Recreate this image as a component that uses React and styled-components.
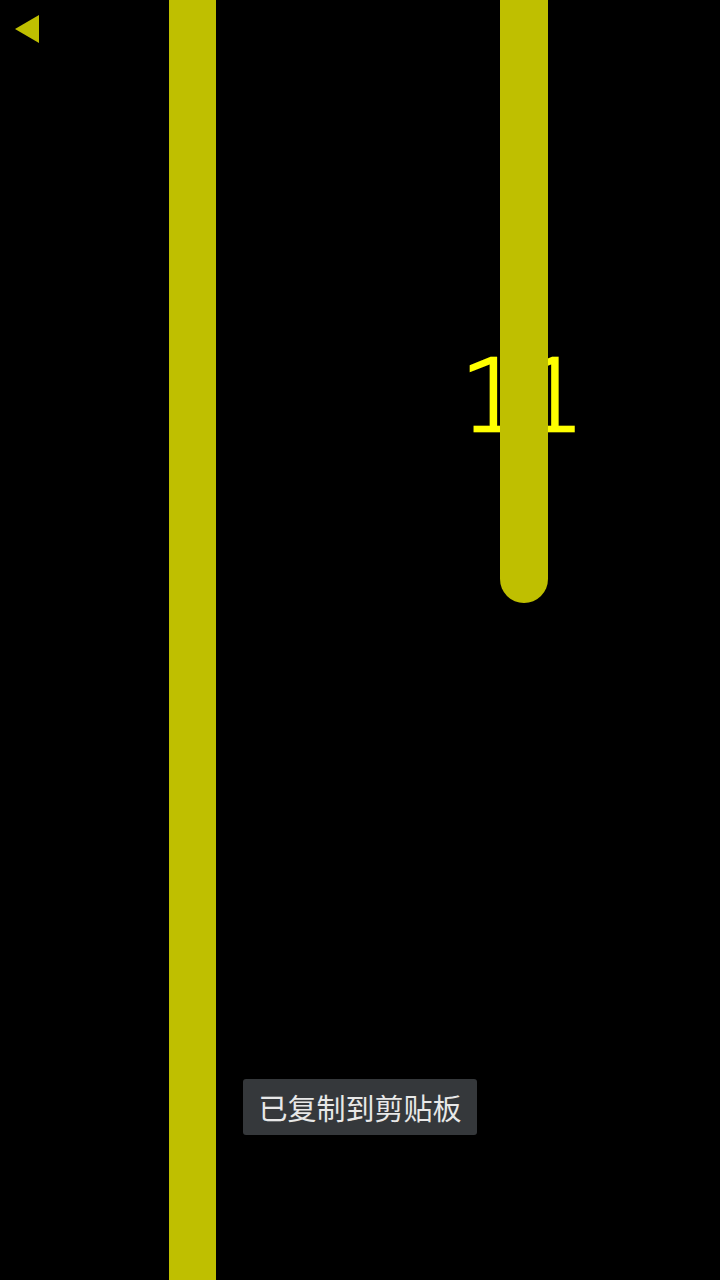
import React from "react";
import styled, { createGlobalStyle } from "styled-components";

const GlobalStyle = createGlobalStyle`
  html, body {
    margin: 0;
    padding: 0;
    background: #000;
  }
  #root {
    height: 1280px;
  }
`;

const Stage = styled.div`
  position: relative;
  width: 720px;
  height: 1280px;
  overflow: hidden;
  background: #000;
  display: flex;
  flex-direction: row;
  align-items: flex-start;
  padding-left: 169px;
  box-sizing: border-box;
  font-family: "Roboto", "Noto Sans CJK SC", sans-serif;
`;

const Bar = styled.div`
  flex: none;
  width: ${p => p.w}px;
  height: ${p => p.h}px;
  margin-left: ${p => p.gap || 0}px;
  background: #bfbf00;
  border-radius: ${p => (p.round ? `0 0 ${p.w / 2}px ${p.w / 2}px` : "0")};
  position: relative;
  z-index: 2;
`;

const BackButton = styled.button`
  position: absolute;
  top: 14px;
  left: 14px;
  width: 28px;
  height: 32px;
  padding: 0;
  border: none;
  background: none;
  z-index: 3;
  & svg {
    display: block;
  }
`;

const Score = styled.div`
  position: absolute;
  top: 342px;
  left: 460px;
  font-family: "DejaVu Sans ExtraLight", "DejaVu Sans", sans-serif;
  font-weight: 200;
  font-size: 100px;
  line-height: 110px;
  letter-spacing: -2px;
  color: #ffff00;
  -webkit-text-stroke: 2.5px #ffff00;
  z-index: 1;
`;

const Toast = styled.div`
  position: absolute;
  top: 1079px;
  left: 243px;
  width: 234px;
  height: 56px;
  box-sizing: border-box;
  background: #35383b;
  border-radius: 3px;
  color: #e8e8e8;
  font-family: "Noto Sans CJK SC", "Noto Sans", sans-serif;
  font-size: 29px;
  display: flex;
  align-items: center;
  justify-content: center;
  z-index: 4;
`;

export default function App() {
  return (
    <>
      <GlobalStyle />
      <Stage>
        <BackButton aria-label="back">
          <svg width="28" height="32" viewBox="0 0 28 32">
            <polygon points="1,15 25,1 25,29" fill="#bfbf00" />
          </svg>
        </BackButton>
        <Bar w={47} h={1280} />
        <Bar w={48} h={603} gap={284} round />
        <Score>11</Score>
        <Toast>已复制到剪贴板</Toast>
      </Stage>
    </>
  );
}
